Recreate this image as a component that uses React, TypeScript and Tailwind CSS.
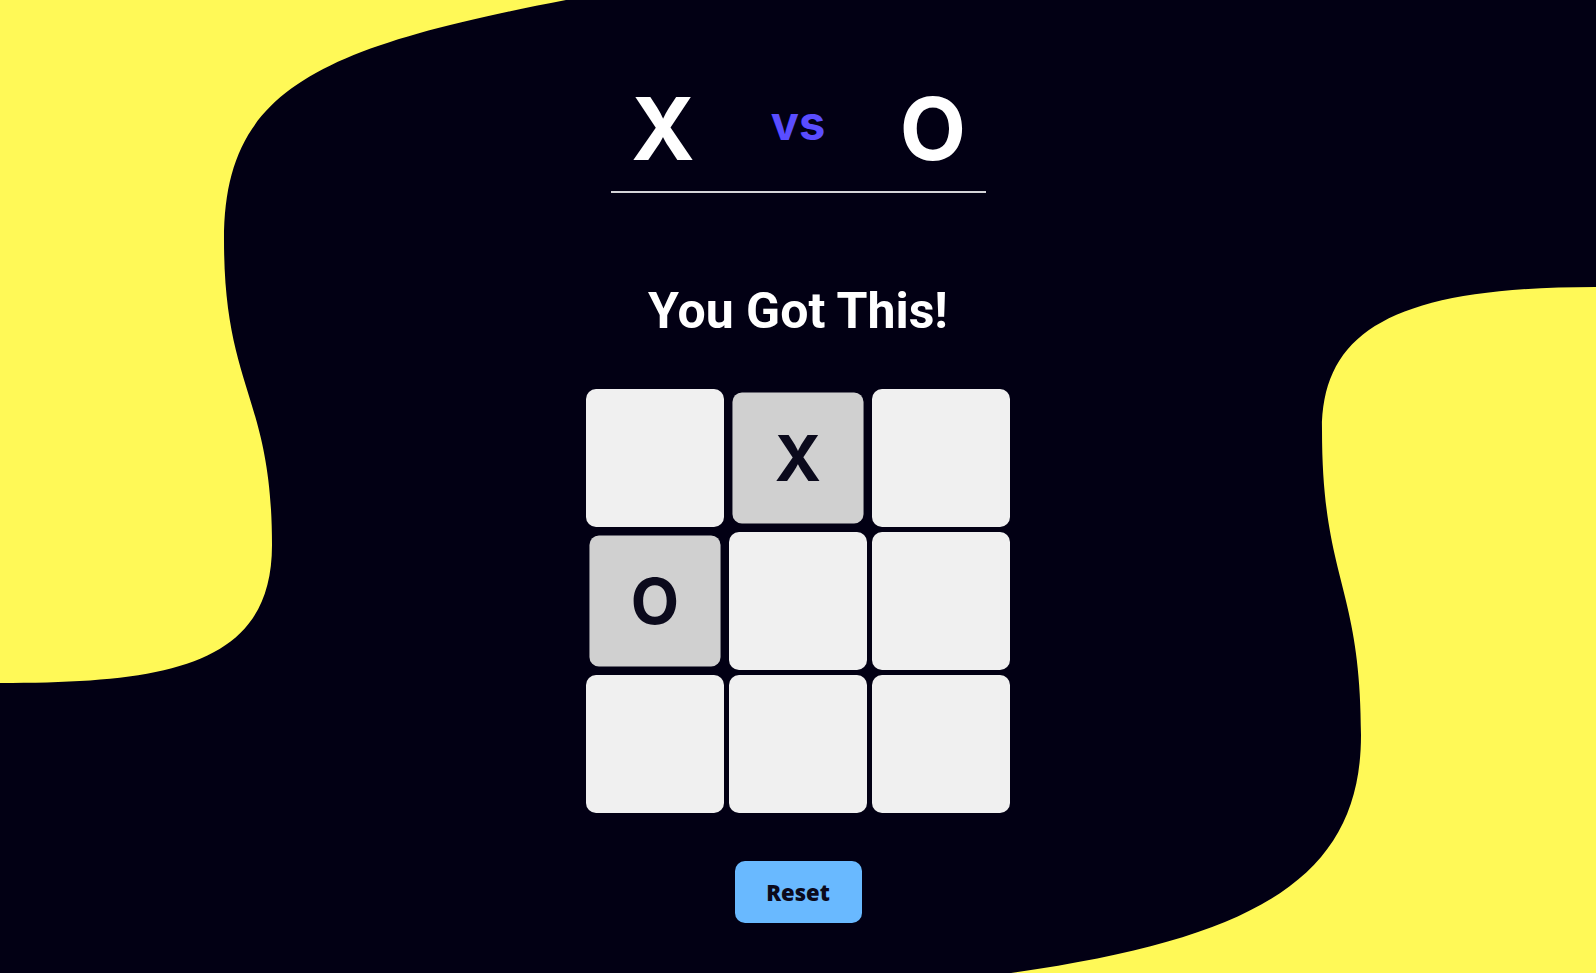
import React, { useState } from 'react';

type Mark = 'X' | 'O' | null;

const startBoard: Mark[] = [null, 'X', null, 'O', null, null, null, null, null];

const Blobs = () => (
  <svg
    className="absolute inset-0 w-full h-full"
    viewBox="0 0 1596 973"
    preserveAspectRatio="none"
  >
    <path
      d="M0 0 H566 C316 48 224 90 224 240 C224 390 272 395 272 545 C272 665 170 683 0 683 Z"
      fill="#fff957"
    />
    <path
      d="M1596 287 C1396 287 1322 330 1322 430 C1322 580 1361 585 1361 735 C1361 875 1261 938 1011 973 L1596 973 Z"
      fill="#fff957"
    />
  </svg>
);

const App = () => {
  const [board, setBoard] = useState<Mark[]>(startBoard);
  const [turn, setTurn] = useState<'X' | 'O'>('X');

  // Jogada numa casa vazia
  const play = (i: number) => {
    if (board[i]) return;
    const next = [...board];
    next[i] = turn;
    setBoard(next);
    setTurn(turn === 'X' ? 'O' : 'X');
  };

  const reset = () => {
    setBoard(Array(9).fill(null));
    setTurn('X');
  };

  return (
    <div className="relative w-full h-[973px] overflow-hidden bg-[#020014]">
      <Blobs />
      <div className="relative flex flex-col items-center pt-[86px]">
        <div className="flex items-start font-['Inter',sans-serif] font-bold">
          <div className="w-[135px] text-center text-[86px] leading-none text-white">X</div>
          <div className="w-[135px] text-center text-[47px] leading-none text-[#5a4dff] mt-[13px]">vs</div>
          <div className="w-[135px] text-center text-[86px] leading-none text-white">O</div>
        </div>
        <div className="w-[375px] h-[2px] bg-[#d4d4d8] mt-[19px]" />

        <h1 className="mt-[93px] text-[50px] leading-none font-bold text-white font-['Roboto',sans-serif]">
          You Got This!
        </h1>

        <div className="mt-[53px] grid grid-cols-3 gap-[5px]">
          {board.map((cell, i) => (
            <button
              key={i}
              onClick={() => play(i)}
              className={
                cell
                  ? 'w-[138px] h-[138px] rounded-[10px] bg-[#d0d0d0] scale-95 flex items-center justify-center text-[66px] leading-none font-bold text-[#0b0a1c] font-["Inter",sans-serif]'
                  : 'w-[138px] h-[138px] rounded-[10px] bg-[#f0f0f0] flex items-center justify-center text-[66px] leading-none font-bold text-[#0b0a1c] font-["Inter",sans-serif]'
              }
            >
              {cell}
            </button>
          ))}
        </div>

        <button
          onClick={reset}
          className="mt-[48px] w-[127px] h-[62px] rounded-[10px] bg-[#69b9ff] text-[22px] font-black text-[#0b0a1c] font-['Noto_Sans',sans-serif]"
        >
          Reset
        </button>
      </div>
    </div>
  );
};

export default App;
